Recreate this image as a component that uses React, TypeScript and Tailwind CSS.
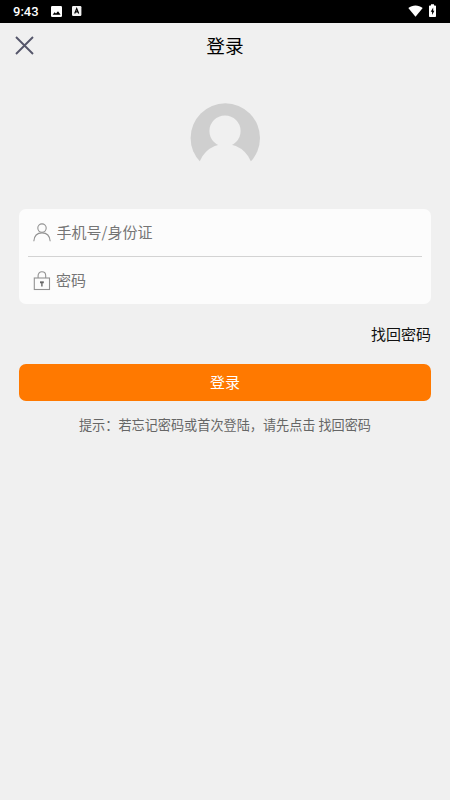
import { useState } from 'react';

function StatusBar() {
  return (
    <div className="flex h-[22.5px] items-center bg-black pl-[13px] pr-[14px] text-white">
      <span className="w-[26px] font-[Roboto] text-[13px] font-medium leading-none">9:43</span>

      {/* gallery notification */}
      <svg className="ml-[12px] h-[11px] w-[11px]" viewBox="0 0 11 11">
        <rect width="11" height="11" rx="1.2" fill="#fff" />
        <path d="M1.6 8.8 L3.6 6.2 L5 7.6 L7 5.2 L9.6 8.8 Z" fill="#000" />
      </svg>

      {/* app notification */}
      <svg className="ml-[10px] h-[10px] w-[10px]" viewBox="0 0 10 10">
        <rect width="9.4" height="10" rx="1.2" fill="#f2f2f2" />
        <path d="M2.7 7.4 L4.7 2.6 L6.7 7.4 M3.4 5.9 H6" fill="none" stroke="#000" strokeWidth="1.2" />
      </svg>

      <svg className="mb-[1px] ml-auto h-[12px] w-[15px]" viewBox="0 0 15 12">
        <path d="M0.3 3.1 C4.4 -0.5 10.6 -0.5 14.7 3.1 L7.5 11.8 Z" fill="#fff" />
      </svg>
      <svg className="mb-[1px] ml-[6px] h-[13px] w-[7px]" viewBox="0 0 7 13">
        <path d="M2 0.3 H5 V1.4 H6.2 Q7 1.4 7 2.2 V12.2 Q7 13 6.2 13 H0.8 Q0 13 0 12.2 V2.2 Q0 1.4 0.8 1.4 H2 Z" fill="#fff" />
        <path d="M4.2 3.4 L1.7 7.7 H3.1 V11 L5.4 6.7 H4.2 Z" fill="#000" />
      </svg>
    </div>
  );
}

function Avatar() {
  return (
    <svg className="h-[70px] w-[70px]" viewBox="0 0 70 70">
      <circle cx="35.3" cy="35" r="34.7" fill="#cfcfcf" />
      <circle cx="35.3" cy="68.5" r="27.5" fill="#f0f0f0" />
      <rect x="0" y="58.5" width="70" height="12" fill="#f0f0f0" />
      <circle cx="35" cy="28" r="15.6" fill="#f0f0f0" />
    </svg>
  );
}

function UserIcon() {
  return (
    <svg className="h-[19px] w-[18px] shrink-0" viewBox="0 0 18 19" fill="none" stroke="#929292" strokeWidth="1.1">
      <circle cx="9" cy="5.1" r="4.2" />
      <path d="M0.8 18.3 C1.2 12.8 4.6 9.9 9 9.9 C13.4 9.9 16.8 12.8 17.2 18.3" />
    </svg>
  );
}

function LockIcon() {
  return (
    <svg className="h-[20px] w-[18px] shrink-0" viewBox="0 0 18 20" fill="none" stroke="#929292" strokeWidth="1.1">
      <rect x="1.3" y="7" width="15.2" height="11.5" />
      <path d="M5.1 7 V4.7 C5.1 2.3 6.7 0.8 8.9 0.8 C11.1 0.8 12.7 2.3 12.7 4.7 V7" />
      <path d="M8.9 11 V15.6" stroke="#666" strokeWidth="1.4" />
      <path d="M7 11.3 H10.8" stroke="#666" strokeWidth="1.9" />
    </svg>
  );
}

export default function App() {
  const [account, setAccount] = useState('');
  const [password, setPassword] = useState('');

  return (
    <div className="h-[800px] w-full overflow-hidden bg-[#f0f0f0] font-['Noto_Sans_CJK_SC',sans-serif]">
      <StatusBar />

      <header className="grid h-[46px] grid-cols-[1fr_auto_1fr] items-center px-[15px]">
        <button aria-label="关闭">
          <svg className="h-[19px] w-[19px]" viewBox="0 0 19 19" stroke="#55566a" strokeWidth="1.9">
            <path d="M1 1 L18 18 M18 1 L1 18" />
          </svg>
        </button>
        <h1 className="text-[18.7px] leading-none text-black">登录</h1>
      </header>

      <main className="px-[19px]">
        <div className="flex justify-center pt-[34.5px]">
          <Avatar />
        </div>

        <div className="mt-9 h-[95px] rounded-[7px] bg-[#fcfcfc] px-[9px]">
          <label className="flex h-[48px] items-center border-b border-[#d3d3d3] pl-[5px]">
            <UserIcon />
            <input
              value={account}
              onChange={(e) => setAccount(e.target.value)}
              placeholder="手机号/身份证"
              className="ml-[5.5px] min-w-0 flex-1 bg-transparent text-[15px] outline-none placeholder:text-[#757575]"
            />
          </label>
          <label className="flex h-[47px] items-center pl-[5px]">
            <LockIcon />
            <input
              type="password"
              value={password}
              onChange={(e) => setPassword(e.target.value)}
              placeholder="密码"
              className="ml-[5px] min-w-0 flex-1 bg-transparent text-[15px] outline-none placeholder:text-[#757575]"
            />
          </label>
        </div>

        <div className="flex h-[60px] items-center justify-end pb-[2px]">
          <button className="text-[15px] leading-none text-[#111]">找回密码</button>
        </div>

        <button className="flex h-[37px] w-full items-center justify-center rounded-[7px] bg-[#ff7900] text-[15px] text-white">
          登录
        </button>

        <p className="mt-[14px] whitespace-nowrap text-center text-[13.15px] leading-[20px] text-[#666]">
          提示：若忘记密码或首次登陆，请先点击 找回密码
        </p>
      </main>
    </div>
  );
}
